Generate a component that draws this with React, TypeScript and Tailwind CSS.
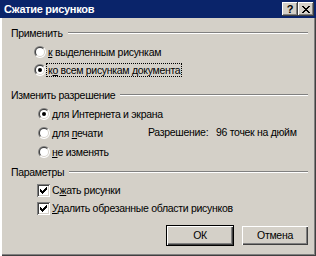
import React from "react";

function Radio({ checked }: { checked?: boolean }) {
  return (
    <svg width="12" height="12" viewBox="0 0 12 12" className="shrink-0">
      <path d="M10.243 1.757 A6 6 0 0 0 1.757 10.243 Z" fill="#808080" />
      <path d="M10.243 1.757 A6 6 0 0 1 1.757 10.243 Z" fill="#ffffff" />
      <path d="M9.536 2.464 A5 5 0 0 0 2.464 9.536 Z" fill="#404040" />
      <path d="M9.536 2.464 A5 5 0 0 1 2.464 9.536 Z" fill="#d4d0c8" />
      <circle cx="6" cy="6" r="4" fill="#ffffff" />
      {checked && <circle cx="6" cy="6" r="2" fill="#000000" />}
    </svg>
  );
}

function Check() {
  const rects: [number, number, number][] = [
    [6, 0, 1],
    [5, 1, 2],
    [0, 2, 1],
    [4, 2, 3],
    [0, 3, 2],
    [3, 3, 3],
    [0, 4, 5],
    [1, 5, 3],
    [2, 6, 1],
  ];
  return (
    <div className="w-[13px] h-[13px] shrink-0 bg-white shadow-[inset_1px_1px_0_#808080,inset_-1px_-1px_0_#ffffff,inset_2px_2px_0_#404040,inset_-2px_-2px_0_#d4d0c8]">
      <svg width="13" height="13" viewBox="0 0 13 13" shapeRendering="crispEdges">
        {rects.map(([x, y, w], i) => (
          <rect key={i} x={x + 3} y={y + 3} width={w} height={1} fill="#000" />
        ))}
      </svg>
    </div>
  );
}

function Header({ children }: { children: React.ReactNode }) {
  return (
    <div className="flex items-center h-[14px] pl-[11px] pr-[8px]">
      <span className="whitespace-nowrap">{children}</span>
      <div className="flex-1 ml-[5px] h-[2px] border-t border-t-[#808080] border-b border-b-white" />
    </div>
  );
}

function Label({ children, focus }: { children: React.ReactNode; focus?: boolean }) {
  return (
    <span
      className={
        "px-[1px] leading-[12px] whitespace-nowrap border " +
        (focus ? "border-dotted border-black" : "border-transparent")
      }
    >
      {children}
    </span>
  );
}

export default function App() {
  return (
    <div className="w-[316px] h-[256px] bg-[#d4d0c8] flex flex-col font-['Liberation_Sans',Arial,sans-serif] text-[10.5px] tracking-[-0.3px] leading-[13px] text-black overflow-hidden">
      <div className="h-[18px] bg-[#0a246a] flex items-center justify-between pl-[4px] pr-[2px] shrink-0">
        <span className="text-white font-bold text-[11px] tracking-[-0.3px] whitespace-nowrap">Сжатие рисунков</span>
        <div className="flex">
          <div className="w-[16px] h-[14px] bg-[#d4d0c8] flex items-center justify-center shadow-[inset_-1px_-1px_0_#404040,inset_1px_1px_0_#ffffff,inset_-2px_-2px_0_#808080]">
            <span className="font-bold text-[11px] leading-[11px] text-black">?</span>
          </div>
          <div className="w-[16px] h-[14px] bg-[#d4d0c8] flex items-center justify-center shadow-[inset_-1px_-1px_0_#404040,inset_1px_1px_0_#ffffff,inset_-2px_-2px_0_#808080]">
            <svg width="8" height="7" viewBox="0 0 8 7" shapeRendering="crispEdges">
              <path d="M0 0h2v1h-2zM6 0h2v1h-2zM1 1h2v1h-2zM5 1h2v1h-2zM2 2h4v1h-4zM3 3h2v1h-2zM2 4h4v1h-4zM1 5h2v1h-2zM5 5h2v1h-2zM0 6h2v1h-2zM6 6h2v1h-2z" fill="#000" />
            </svg>
          </div>
        </div>
      </div>
      <div className="flex-1 flex flex-col pt-[8px] shadow-[inset_2px_0_0_#ffffff,inset_-1px_-1px_0_#404040,inset_-2px_-2px_0_#808080]">
        <Header>Применить</Header>
        <div className="mt-[3px] h-[18px] flex items-center pl-[34px]">
          <Radio />
          <Label>
            <span className="underline">к</span> выделенным рисункам
          </Label>
        </div>
        <div className="h-[18px] flex items-center pl-[34px]">
          <Radio checked />
          <Label focus>
            к<span className="underline">о</span> всем рисункам документа
          </Label>
        </div>

        <div className="mt-[9px]">
          <Header>Изменить разрешение</Header>
        </div>
        <div className="mt-[2px] h-[19px] flex items-center pl-[38px]">
          <Radio checked />
          <Label>для Интернета и экрана</Label>
        </div>
        <div className="h-[19px] flex items-center pl-[38px]">
          <Radio />
          <div className="w-[98px] flex">
            <Label>
              для <span className="underline">п</span>ечати
            </Label>
          </div>
          <span className="w-[68px] whitespace-nowrap">Разрешение:</span>
          <span className="whitespace-nowrap">96 точек на дюйм</span>
        </div>
        <div className="h-[19px] flex items-center pl-[38px]">
          <Radio />
          <Label>
            <span className="underline">н</span>е изменять
          </Label>
        </div>

        <div className="mt-[4px]">
          <Header>Параметры</Header>
        </div>
        <div className="mt-[2px] h-[18px] flex items-center pl-[37px] gap-[2px]">
          <Check />
          <span className="whitespace-nowrap">
            С<span className="underline">ж</span>ать рисунки
          </span>
        </div>
        <div className="h-[18px] flex items-center pl-[37px] gap-[2px]">
          <Check />
          <span className="whitespace-nowrap">
            <span className="underline">У</span>далить обрезанные области рисунков
          </span>
        </div>

        <div className="mt-[8px] flex justify-end pr-[7px] gap-[7px]">
          <div className="w-[68px] h-[21px] border border-black">
            <div className="w-full h-full flex items-center justify-center shadow-[inset_1px_1px_0_#ffffff,inset_-1px_-1px_0_#404040,inset_-2px_-2px_0_#808080]">
              ОК
            </div>
          </div>
          <div className="w-[68px] h-[21px] p-[1px]">
            <div className="w-full h-full flex items-center justify-center shadow-[inset_1px_1px_0_#ffffff,inset_-1px_-1px_0_#404040,inset_-2px_-2px_0_#808080]">
              Отмена
            </div>
          </div>
        </div>
      </div>
    </div>
  );
}
